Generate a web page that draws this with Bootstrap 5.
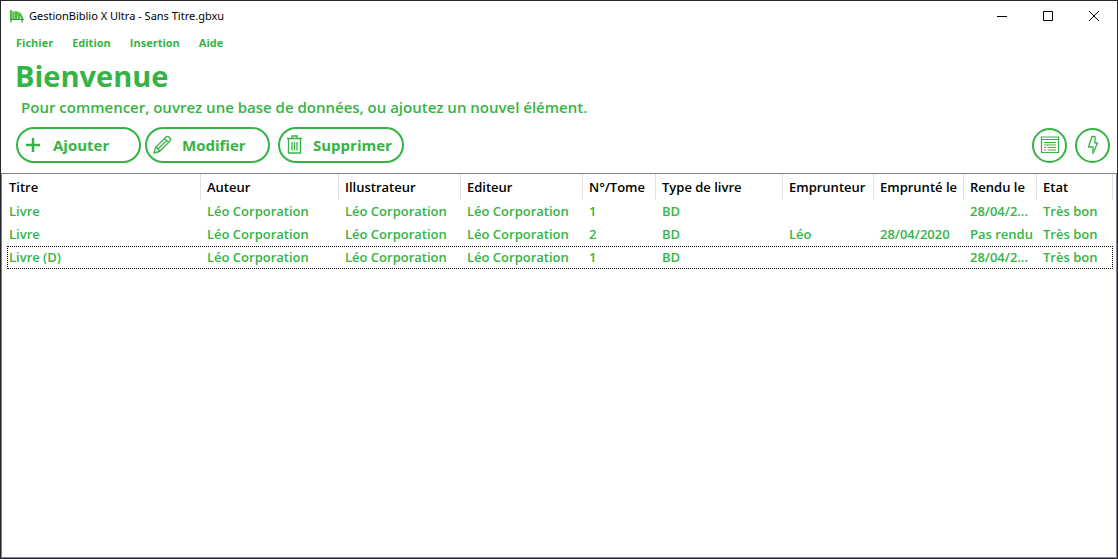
<!DOCTYPE html>
<html lang="fr">
<head>
<meta charset="utf-8">
<meta name="viewport" content="width=device-width, initial-scale=1">
<title>GestionBiblio X Ultra - Sans Titre.gbxu</title>
<link href="https://cdn.jsdelivr.net/npm/bootstrap@5.3.0/dist/css/bootstrap.min.css" rel="stylesheet">
<style>
:root { --vert: #35b445; }
body { font-family: "Open Sans", "Noto Sans", sans-serif; font-size: 13px; color: #000; }
.fenetre { border: 1px solid #25232b; }
.barre-titre { height: 30px; padding-left: 8px; font-family: "Noto Sans", sans-serif; font-size: 11px; }
.logo { width: 16px; height: 16px; }
.ctl { width: 46px; height: 28px; }
.menu { height: 24px; padding-left: 7px; font-size: 11px; font-weight: 700; }
.menu .nav-link { padding: 0 8px; line-height: 24px; color: var(--vert); }
.menu .nav-link + .nav-link { margin-left: 3px; }
h1 { font-size: 29px; line-height: 42px; font-weight: 700; color: var(--vert); padding-left: 14px; }
.intro { font-size: 15px; line-height: 20px; font-weight: 600; color: var(--vert); padding-left: 20px; }
.outils { padding: 10px 7px 10px 15px; }
.btn-vert { --bs-btn-color: var(--vert); --bs-btn-border-color: var(--vert); --bs-btn-hover-color: #fff; --bs-btn-hover-bg: var(--vert); --bs-btn-border-width: 2px; }
.action { min-width: 125px; height: 36px; padding: 0 10px 0 5px; font-size: 15px; font-weight: 700; gap: 8px; }
.action svg { flex: none; }
.rond { width: 35px; height: 35px; }
.liste { border: 1px solid #82848c; padding: 0 3px 0 5px; }
.livres { table-layout: fixed; width: 100%; border-collapse: separate; border-spacing: 0; white-space: nowrap; }
.livres th, .livres td { padding: 0 3px 0 6px; overflow: hidden; text-overflow: ellipsis; }
.livres th:first-child, .livres td:first-child { padding-left: 2px; }
.livres th { height: 26px; padding-top: 2px; font-weight: 600; border-right: 1px solid #e2e2e2; }
.livres td { height: 23px; font-weight: 600; color: var(--vert); }
.choisi { outline: 1px dotted #000; outline-offset: -1px; }
</style>
</head>
<body>
<div class="fenetre d-flex flex-column vh-100">
  <header class="barre-titre d-flex align-items-center">
    <svg class="logo me-1" viewBox="0 0 16 16" fill="none" stroke="#4fc044" stroke-width="2.200"><path d="M2 2v9M4.500 3.500v8M7 3v8M9 4l1 7M10.500 5l3 6"/><path d="M1 11.500h14M2 12v2.500M13 12v2.500" stroke="#35993b" stroke-width="1.200"/></svg>
    <span>GestionBiblio X Ultra - Sans Titre.gbxu</span>
    <div class="d-flex ms-auto">
      <button class="ctl btn p-0 border-0 rounded-0 d-flex align-items-center justify-content-center" aria-label="Réduire"><svg width="12" height="12" stroke="#000" fill="none"><path d="M1 6.500h10"/></svg></button>
      <button class="ctl btn p-0 border-0 rounded-0 d-flex align-items-center justify-content-center" aria-label="Agrandir"><svg width="12" height="12" stroke="#000" fill="none"><path d="M1.500 1.500h9v9h-9z"/></svg></button>
      <button class="ctl btn p-0 border-0 rounded-0 d-flex align-items-center justify-content-center" aria-label="Fermer"><svg width="12" height="12" stroke="#000" fill="none"><path d="M1 1l10 10M11 1L1 11"/></svg></button>
    </div>
  </header>
  <nav class="menu nav">
    <a class="nav-link" href="#">Fichier</a>
    <a class="nav-link" href="#">Edition</a>
    <a class="nav-link" href="#">Insertion</a>
    <a class="nav-link" href="#">Aide</a>
  </nav>
  <h1 class="m-0">Bienvenue</h1>
  <p class="intro m-0">Pour commencer, ouvrez une base de données, ou ajoutez un nouvel élément.</p>
  <div class="outils d-flex align-items-center">
    <button class="btn btn-vert action rounded-pill d-flex align-items-center"><svg width="22" height="22" viewBox="0 0 22 22" fill="none" stroke="currentColor" stroke-width="2.500"><path d="M3 11h14M10 4v14"/></svg>Ajouter</button>
    <button class="btn btn-vert action rounded-pill d-flex align-items-center ms-1"><svg width="22" height="22" viewBox="0 0 22 22" fill="none" stroke="currentColor" stroke-width="1.300" stroke-linejoin="round"><path d="M2 19l1.500-5.500L14 3q1.500-1.500 3.500.5t.5 3.500L7.500 17.500zM3.500 13.500q3 .5 4 4M12.500 4.500l4 4M5.500 15.500l9-9"/></svg>Modifier</button>
    <button class="btn btn-vert action rounded-pill d-flex align-items-center ms-2"><svg width="20" height="22" viewBox="1 0 20 22" fill="none" stroke="currentColor" stroke-width="1.300"><path d="M3 4.500h15M8 4V2h5v2M4.500 5v14h12V5M8 8v8.500M10.500 8v8.500M13 8v8.500"/></svg>Supprimer</button>
    <button class="btn btn-vert rond p-0 rounded-circle d-flex align-items-center justify-content-center ms-auto" aria-label="Liste"><svg width="20" height="20" viewBox="0 0 20 20" fill="none" stroke="currentColor" stroke-width="1.200"><path d="M1.500 2h17v15.500h-17zM2 4.500h16M4 7.500h12M4 10h12M4 12.500h2M7.500 12.500h8.500M4 15h2M7.500 15h8.500"/></svg></button>
    <button class="btn btn-vert rond p-0 rounded-circle d-flex align-items-center justify-content-center ms-2" aria-label="Actions rapides"><svg width="20" height="20" viewBox="0 0 20 20" fill="none" stroke="currentColor" stroke-width="1.300" stroke-linejoin="round"><path d="M9 1.500h3v6.500h2.500L10 18.500V12H5.500z"/></svg></button>
  </div>
  <main class="liste flex-grow-1">
    <table class="livres">
      <colgroup><col style="width:194px"><col style="width:138px"><col style="width:122px"><col style="width:122px"><col style="width:73px"><col style="width:127px"><col style="width:91px"><col style="width:90px"><col style="width:73px"><col style="width:76px"></colgroup>
      <thead><tr><th>Titre</th><th>Auteur</th><th>Illustrateur</th><th>Editeur</th><th>N°/Tome</th><th>Type de livre</th><th>Emprunteur</th><th>Emprunté le</th><th>Rendu le</th><th>Etat</th></tr></thead>
      <tbody>
        <tr><td>Livre</td><td>Léo Corporation</td><td>Léo Corporation</td><td>Léo Corporation</td><td>1</td><td>BD</td><td></td><td></td><td>28/04/2...</td><td>Très bon</td></tr>
        <tr><td>Livre</td><td>Léo Corporation</td><td>Léo Corporation</td><td>Léo Corporation</td><td>2</td><td>BD</td><td>Léo</td><td>28/04/2020</td><td>Pas rendu</td><td>Très bon</td></tr>
        <tr class="choisi"><td>Livre (D)</td><td>Léo Corporation</td><td>Léo Corporation</td><td>Léo Corporation</td><td>1</td><td>BD</td><td></td><td></td><td>28/04/2...</td><td>Très bon</td></tr>
      </tbody>
    </table>
  </main>
</div>
<script src="https://cdn.jsdelivr.net/npm/bootstrap@5.3.0/dist/js/bootstrap.bundle.min.js"></script>
</body>
</html>
